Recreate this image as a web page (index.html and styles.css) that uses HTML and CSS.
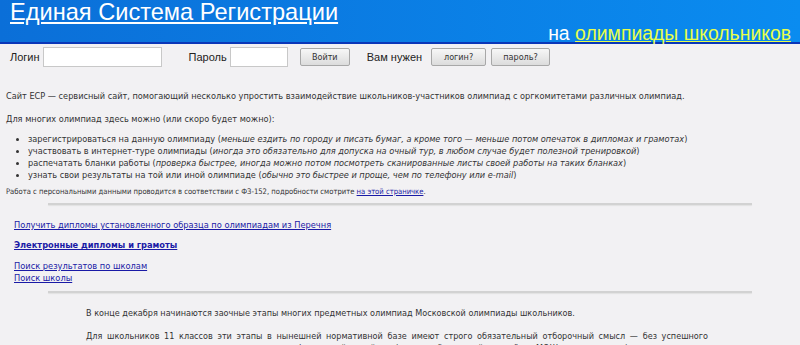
FILE: index.html
```html
<!DOCTYPE html>
<html lang="ru">
<head>
    <meta charset="UTF-8">
    <title>Единая Система Регистрации</title>
    <link rel="stylesheet" href="styles.css">
</head>
<body>
    <div class="header">
        <a class="site-title" href="#">Единая Система Регистрации</a>
        <div class="subtitle">на <a href="#">олимпиады школьников</a></div>
    </div>

    <form class="login-bar">
        <label for="login">Логин</label>
        <input type="text" id="login" class="login-input">
        <label for="password">Пароль</label>
        <input type="password" id="password" class="pass-input">
        <button type="button" class="btn enter-btn">Войти</button>
        <span class="need">Вам нужен</span>
        <button type="button" class="btn">логин?</button>
        <button type="button" class="btn">пароль?</button>
    </form>

    <div class="content">
        <p class="intro">Сайт ЕСР — сервисный сайт, помогающий несколько упростить взаимодействие школьников-участников олимпиад с оргкомитетами различных олимпиад.</p>
        <p class="intro">Для многих олимпиад здесь можно (или скоро будет можно):</p>
        <ul class="features">
            <li>зарегистрироваться на данную олимпиаду (<i>меньше ездить по городу и писать бумаг, а кроме того — меньше потом опечаток в дипломах и грамотах</i>)</li>
            <li>участвовать в интернет-туре олимпиады (<i>иногда это обязательно для допуска на очный тур, в любом случае будет полезной тренировкой</i>)</li>
            <li>распечатать бланки работы (<i>проверка быстрее, иногда можно потом посмотреть сканированные листы своей работы на таких бланках</i>)</li>
            <li>узнать свои результаты на той или иной олимпиаде (<i>обычно это быстрее и проще, чем по телефону или e-mail</i>)</li>
        </ul>
        <p class="note">Работа с персональными данными проводится в соответствии с ФЗ-152, подробности смотрите <a href="#">на этой страничке</a>.</p>
    </div>

    <hr class="divider">

    <div class="links">
        <p><a href="#">Получить дипломы установленного образца по олимпиадам из Перечня</a></p>
        <p><a href="#" class="strong-link">Электронные дипломы и грамоты</a></p>
        <p><a href="#">Поиск результатов по школам</a><br><a href="#">Поиск школы</a></p>
    </div>

    <hr class="divider divider-low">

    <div class="news">
        <p>В конце декабря начинаются заочные этапы многих предметных олимпиад Московской олимпиады школьников.</p>
        <p>Для школьников 11 классов эти этапы в нынешней нормативной базе имеют строго обязательный отборочный смысл — без успешного прохождения заочного этапа нельзя попасть на финальный очный тур (кроме победителей и призёров МОШ прошлого года).</p>
    </div>
</body>
</html>
```

FILE: styles.css
```css
body {
    margin: 0;
    background: #f2f1f3;
    color: #333;
    font-family: "DejaVu Sans Condensed", "DejaVu Sans", sans-serif;
    font-size: 9.1px;
}

a {
    color: #1a1aa6;
}

.header {
    height: 42px;
    display: flex;
    flex-direction: column;
    background: linear-gradient(to right, #0b6fd8, #0a8cf0);
    border-bottom: 2px solid #0a36b8;
    font-family: "Liberation Sans", Arial, sans-serif;
}

.site-title {
    color: #fff;
    font-size: 23.6px;
    line-height: 24px;
    margin-left: 10px;
    align-self: flex-start;
}

.subtitle {
    align-self: flex-end;
    color: #fff;
    font-size: 19.4px;
    line-height: 18px;
    margin-right: 9px;
}

.subtitle a {
    color: #e8ff4a;
}

.login-bar {
    display: flex;
    align-items: center;
    height: 25px;
    padding-left: 10px;
    font-family: "Liberation Sans", Arial, sans-serif;
    font-size: 11px;
    color: #222;
}

.login-bar input {
    height: 18px;
    padding: 0;
    border: 1px solid #c8c8c8;
    background: #fff;
    margin-left: 3px;
}

.login-input {
    width: 117px;
    margin-right: 27px;
}

.pass-input {
    width: 56px;
    margin-right: 12px;
}

.btn {
    height: 18px;
    padding: 0;
    border: 1px solid #a8a8a8;
    border-radius: 2px;
    background: linear-gradient(#f7f7f7, #dcdcdc);
    font-family: "DejaVu Sans Condensed", sans-serif;
    font-size: 9px;
    color: #333;
    width: 55px;
    margin-right: 5px;
}

.enter-btn {
    width: 50px;
    margin-right: 17px;
}

.btn:last-child {
    width: 59px;
}

.need {
    margin-right: 9px;
}

.content {
    padding: 0 6px;
}

.content p,
.content ul {
    margin: 0;
}

.intro {
    line-height: 12px;
    margin-top: 21px !important;
}

.intro + .intro {
    margin-top: 11px !important;
}

.features {
    padding-left: 22px !important;
    margin-top: 8px !important;
    line-height: 12px;
}

.note {
    font-size: 7.6px;
    line-height: 10px;
    margin-top: 6px !important;
}

.divider {
    width: 88%;
    margin: 6px auto 0;
    border: 0;
    height: 2px;
    background: #d2d2d2;
    box-shadow: 0 1px 1px #e2e2e2;
}

.links {
    padding: 0 14px;
    font-size: 9.2px;
}

.links p {
    margin: 0;
    line-height: 12px;
}

.links p:first-child {
    margin-top: 14px;
}

.links p + p {
    margin-top: 8px;
}

.links p:last-child {
    margin-top: 9px;
}

.strong-link {
    font-weight: bold;
}

.divider-low {
    margin-top: 7px;
}

.news {
    width: 622px;
    margin-left: 86px;
    font-size: 9px;
    text-align: justify;
}

.news p {
    margin: 14px 0 0;
    line-height: 12px;
}

.news p + p {
    margin-top: 11px;
}
```
